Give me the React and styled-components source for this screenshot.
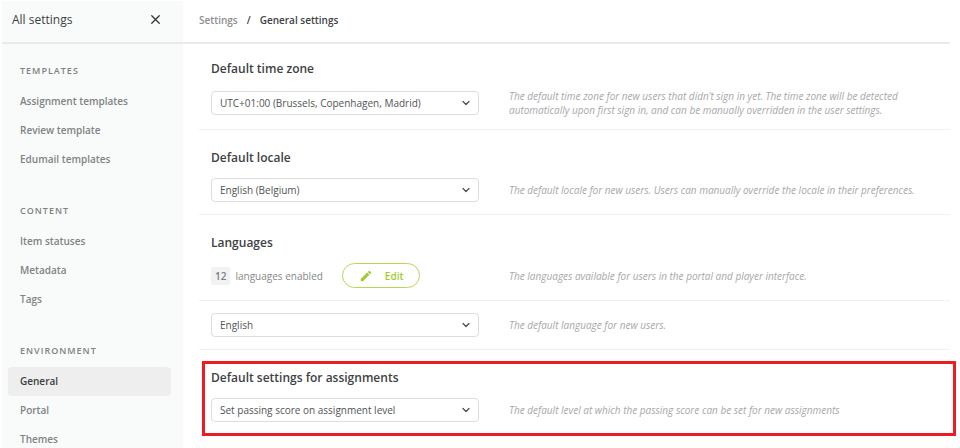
import { ChevronDown, X } from "lucide-react";
import { MdEdit } from "react-icons/md";
import styled, { createGlobalStyle } from "styled-components";

const GlobalStyle = createGlobalStyle`
	* {
		box-sizing: border-box;
	}
	body {
		margin: 0;
		background-color: white;
		color: #3d4143;
		font-family: "Open Sans", sans-serif;
		font-size: 10px;
	}
	button, select {
		font-family: inherit;
		font-size: inherit;
	}
`;

const Page = styled.div`
	display: flex;
	height: 100vh;
	padding: 1px 10px 0 2px;
`;

const Sidebar = styled.aside`
	flex: 0 0 181px;
	display: flex;
	flex-direction: column;
	background-color: #f9fbfa;
`;

const Header = styled.header`
	flex: none;
	height: 43px;
	display: flex;
	align-items: center;
	padding-bottom: 4px;
	border-bottom: 2px solid #e9ebea;
`;

const SidebarHeader = styled(Header)`
	justify-content: space-between;
	padding-left: 10px;
	padding-right: 20px;
`;

const SidebarTitle = styled.h1`
	margin: 0;
	font-size: 12px;
	font-weight: 400;
`;

const CloseButton = styled.button`
	display: flex;
	padding: 0;
	border: none;
	background: none;
	color: #2f3335;
	cursor: pointer;
`;

const Nav = styled.nav`
	flex: 1;
	padding-top: 19px;
	overflow-y: auto;
	scrollbar-width: none;
`;

const Group = styled.section`
	padding: 0 12px 29px 6px;
`;

const GroupTitle = styled.h2`
	margin: 0 0 8px;
	padding-left: 12px;
	color: #7f8182;
	font-size: 9px;
	font-weight: 600;
	line-height: 16px;
	letter-spacing: 1px;
	text-transform: uppercase;
`;

const NavLink = styled.a`
	display: block;
	padding-left: 12px;
	border-radius: 4px;
	background-color: ${({ $active }) => ($active ? "#eeeeee" : "transparent")};
	color: ${({ $active }) => ($active ? "#3a3d3f" : "#808284")};
	font-weight: 600;
	line-height: 29px;
	text-decoration: none;
`;

const Main = styled.main`
	flex: 1;
	min-width: 0;
`;

const Breadcrumbs = styled(Header)`
	gap: 9px;
	padding-left: 16px;
	font-weight: 600;
`;

const Crumb = styled.a`
	color: #8c8e8f;
	text-decoration: none;
`;

const Settings = styled.div`
	margin-left: 16px;
`;

const Row = styled.section`
	position: relative;
	padding: ${({ $titled }) => ($titled ? "18px" : "12px")} 12px 12px;
	border-bottom: 1px solid #f0f0f0;

	&:first-child {
		padding-top: 15px;
	}
`;

const Highlight = styled.div`
	position: absolute;
	inset: 11px -6px -2px 3px;
	border: 3px solid #ed1c24;
	pointer-events: none;
`;

const RowTitle = styled.h2`
	margin: 0 0 10px;
	font-size: 12px;
	font-weight: 600;
	line-height: 20px;
`;

const RowBody = styled.div`
	display: flex;
	align-items: center;
	gap: 30px;
`;

const Control = styled.div`
	flex: 0 0 268px;
	display: flex;
	align-items: center;
`;

const Help = styled.p`
	flex: 1;
	margin: 0;
	color: #a6a8a9;
	font-style: italic;
	line-height: 14px;
`;

const SelectBox = styled.div`
	position: relative;
	flex: 1;
	display: flex;

	svg {
		position: absolute;
		top: 6px;
		right: 7px;
		pointer-events: none;
	}
`;

const Select = styled.select`
	width: 100%;
	height: 24px;
	padding: 0 28px 0 8px;
	border: 1px solid #dcdedd;
	border-radius: 4px;
	background-color: white;
	color: #505456;
	appearance: none;
`;

const Count = styled.span`
	margin-right: 5px;
	padding: 0 4px;
	border-radius: 2px;
	background-color: #f1f3f2;
	color: #7b7d7e;
	font-weight: 600;
	line-height: 18px;
`;

const CountLabel = styled.span`
	color: #858788;
`;

const EditButton = styled.button`
	display: flex;
	align-items: center;
	gap: 12px;
	height: 25px;
	margin-left: 19px;
	padding: 0 16px;
	border: 1px solid #b5d957;
	border-radius: 13px;
	background-color: white;
	color: #9fcb2d;
	font-weight: 600;
	cursor: pointer;
`;

const groups = [
	{
		title: "Templates",
		items: ["Assignment templates", "Review template", "Edumail templates"],
	},
	{ title: "Content", items: ["Item statuses", "Metadata", "Tags"] },
	{ title: "Environment", items: ["General", "Portal", "Themes"] },
];

const SettingRow = ({ id, title, help, highlighted, children }) => {
	return (
		<Row $titled={Boolean(title)}>
			{title && (
				<RowTitle>
					<label htmlFor={id}>{title}</label>
				</RowTitle>
			)}
			<RowBody>
				<Control>{children}</Control>
				<Help id={`${id}-help`}>{help}</Help>
			</RowBody>
			{highlighted && <Highlight />}
		</Row>
	);
};

const Dropdown = ({ id, value, ...rest }) => {
	return (
		<SelectBox>
			<Select id={id} defaultValue={value} {...rest}>
				<option>{value}</option>
			</Select>
			<ChevronDown size={12} color="#4a4e50" strokeWidth={2.5} />
		</SelectBox>
	);
};

const App = () => {
	return (
		<Page>
			<GlobalStyle />
			<Sidebar>
				<SidebarHeader>
					<SidebarTitle>All settings</SidebarTitle>
					<CloseButton aria-label="Close">
						<X size={15} strokeWidth={2} />
					</CloseButton>
				</SidebarHeader>
				<Nav>
					{groups.map((group) => (
						<Group key={group.title}>
							<GroupTitle>{group.title}</GroupTitle>
							{group.items.map((item) => (
								<NavLink key={item} href="#" $active={item === "General"}>
									{item}
								</NavLink>
							))}
						</Group>
					))}
				</Nav>
			</Sidebar>
			<Main>
				<Breadcrumbs>
					<Crumb href="#">Settings</Crumb>
					<span>/</span>
					<span>General settings</span>
				</Breadcrumbs>
				<Settings>
					<SettingRow
						id="timezone"
						title="Default time zone"
						help="The default time zone for new users that didn’t sign in yet. The time zone will be detected automatically upon first sign in, and can be manually overridden in the user settings."
					>
						<Dropdown id="timezone" value="UTC+01:00 (Brussels, Copenhagen, Madrid)" />
					</SettingRow>
					<SettingRow
						id="locale"
						title="Default locale"
						help="The default locale for new users. Users can manually override the locale in their preferences."
					>
						<Dropdown id="locale" value="English (Belgium)" />
					</SettingRow>
					<SettingRow
						id="languages"
						title="Languages"
						help="The languages available for users in the portal and player interface."
					>
						<Count>12</Count>
						<CountLabel>languages enabled</CountLabel>
						<EditButton id="languages">
							<MdEdit size={14} />
							Edit
						</EditButton>
					</SettingRow>
					<SettingRow id="language" help="The default language for new users.">
						<Dropdown id="language" value="English" aria-labelledby="language-help" />
					</SettingRow>
					<SettingRow
						id="passing-score"
						title="Default settings for assignments"
						help="The default level at which the passing score can be set for new assignments"
						highlighted
					>
						<Dropdown id="passing-score" value="Set passing score on assignment level" />
					</SettingRow>
				</Settings>
			</Main>
		</Page>
	);
};

export default App;
